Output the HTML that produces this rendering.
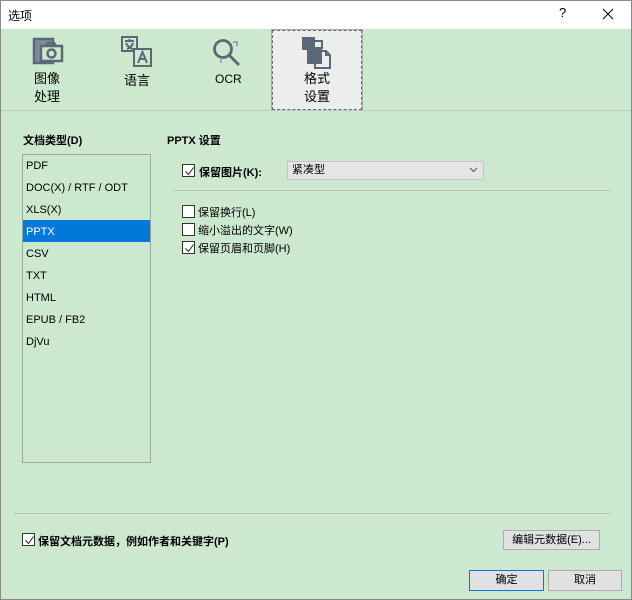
<!DOCTYPE html>
<html><head><meta charset="utf-8"><style>
*{margin:0;padding:0;box-sizing:border-box}
body{width:632px;height:600px;overflow:hidden;font-family:"Liberation Sans","Noto Sans CJK SC",sans-serif;font-size:11px;color:#000;background:#cce8cf;position:relative}
.a{position:absolute;white-space:nowrap}
.win{position:absolute;left:0;top:0;width:632px;height:600px;border:1px solid #8a8a8a}
.title{position:absolute;left:0;top:0;width:632px;height:29px;background:#fff}
.cb{position:absolute;width:13px;height:13px;border:1px solid #333;background:#fff}
.cb svg{position:absolute;left:1px;top:1px}
.btn{position:absolute;background:#e1e1e1;border:1px solid #adadad;text-align:center;line-height:18px}
.it{position:absolute;left:3px;line-height:22px}
</style></head><body>
<div class="title"></div>
<div class="a" style="left:8px;top:7px;font-size:12px">选项</div>
<div class="a" style="left:559px;top:5px;font-size:13px">?</div>
<svg class="a" style="left:602px;top:8px" width="12" height="12"><path d="M1 1L11 11M11 1L1 11" stroke="#000" stroke-width="1"/></svg>
<div class="win"></div>

<!-- toolbar -->
<div class="a" style="left:272px;top:30px;width:90px;height:80px;background:#eceeed;border:1px dashed #666;outline:1px solid #aaa"></div>
<svg class="a" style="left:32px;top:37px" width="34" height="30" fill="none" stroke="#5b6877" stroke-width="2.5">
<rect x="2" y="2" width="19" height="24" fill="#7f8b97"/><rect x="9" y="9" width="21" height="15" fill="#cce8cf"/><circle cx="19.5" cy="16.5" r="4"/><path d="M14 9l2-3h6l2 3"/></svg>
<svg class="a" style="left:120px;top:35px" width="36" height="34" fill="none" stroke="#5b6877" stroke-width="2">
<path d="M2 2h15v14H2z"/><path d="M5 6h9M9.5 4v2M6 8c2 4 4 5 7 6M13 8c-1 3-3 5-6 6"/><rect x="14" y="14" width="17" height="17" fill="#cce8cf"/><path d="M18 28l4.5-11 4.5 11M19.5 24h6"/></svg>
<svg class="a" style="left:211px;top:37px" width="34" height="34" fill="none" stroke="#5b6877" stroke-width="2.8">
<circle cx="12" cy="12" r="8.5"/><path d="M18 18l10 10"/><path d="M22 5h4v4M10 21v5" stroke="#9aa" stroke-width="2"/></svg>
<svg class="a" style="left:301px;top:36px" width="34" height="34" fill="none" stroke="#5b6877" stroke-width="2">
<rect x="2" y="2" width="11" height="11" fill="#5b6877"/><path d="M13 5h8v8"/><rect x="7" y="12" width="13" height="15" fill="#5b6877"/><path d="M20 15h5l4 4v13H14v-5"/><path d="M25 15v4h4"/></svg>
<div class="a" style="left:34px;top:70px;font-size:13px;line-height:18px">图像<br>处理</div>
<div class="a" style="left:124px;top:70px;font-size:13px">语言</div>
<div class="a" style="left:215px;top:72px;font-size:12px">OCR</div>
<div class="a" style="left:304px;top:70px;font-size:13px;line-height:18px">格式<br>设置</div>
<div class="a" style="left:1px;top:110px;width:630px;height:1px;background:#b8cdbb"></div>

<!-- left -->
<div class="a" style="left:23px;top:132px;font-weight:bold">文档类型(D)</div>
<div class="a" style="left:22px;top:154px;width:129px;height:309px;border:1px solid #9aa9a0">
<div class="a" style="left:0;top:65px;width:127px;height:22px;background:#0078d7"></div>
<div class="it" style="top:0">PDF</div>
<div class="it" style="top:22px">DOC(X) / RTF / ODT</div>
<div class="it" style="top:44px">XLS(X)</div>
<div class="it" style="top:66px;color:#fff">PPTX</div>
<div class="it" style="top:88px">CSV</div>
<div class="it" style="top:110px">TXT</div>
<div class="it" style="top:132px">HTML</div>
<div class="it" style="top:154px">EPUB / FB2</div>
<div class="it" style="top:176px">DjVu</div>
</div>

<!-- right -->
<div class="a" style="left:167px;top:132px;font-weight:bold">PPTX 设置</div>
<div class="cb" style="left:182px;top:164px"><svg width="11" height="11"><path d="M1.5 5.5l3 3 5-7" stroke="#222" fill="none"/></svg></div>
<div class="a" style="left:199px;top:164px;font-weight:bold">保留图片(K):</div>
<div class="a" style="left:287px;top:161px;width:197px;height:19px;background:#e5e5e5;border:1px solid #c4c4c4;padding-left:4px;line-height:17px">紧凑型</div>
<svg class="a" style="left:469px;top:167px" width="9" height="6"><path d="M1 1l3.5 3.5L8 1" stroke="#555" fill="none"/></svg>
<div class="a" style="left:174px;top:190px;width:436px;height:1px;background:#aec6b2"></div>
<div class="cb" style="left:182px;top:205px"></div>
<div class="a" style="left:198px;top:204px">保留换行(L)</div>
<div class="cb" style="left:182px;top:223px"></div>
<div class="a" style="left:198px;top:222px">缩小溢出的文字(W)</div>
<div class="cb" style="left:182px;top:241px"><svg width="11" height="11"><path d="M1.5 5.5l3 3 5-7" stroke="#222" fill="none"/></svg></div>
<div class="a" style="left:198px;top:240px">保留页眉和页脚(H)</div>

<!-- bottom -->
<div class="a" style="left:13px;top:513px;width:597px;height:1px;background:#aec6b2"></div>
<div class="cb" style="left:22px;top:533px"><svg width="11" height="11"><path d="M1.5 5.5l3 3 5-7" stroke="#222" fill="none"/></svg></div>
<div class="a" style="left:38px;top:533px;font-weight:bold">保留文档元数据，例如作者和关键字(P)</div>
<div class="btn" style="left:503px;top:530px;width:97px;height:20px">编辑元数据(E)...</div>
<div class="btn" style="left:469px;top:570px;width:75px;height:21px;border:1px solid #0078d7;line-height:19px">确定</div>
<div class="btn" style="left:548px;top:570px;width:74px;height:21px;line-height:19px">取消</div>
</body></html>
